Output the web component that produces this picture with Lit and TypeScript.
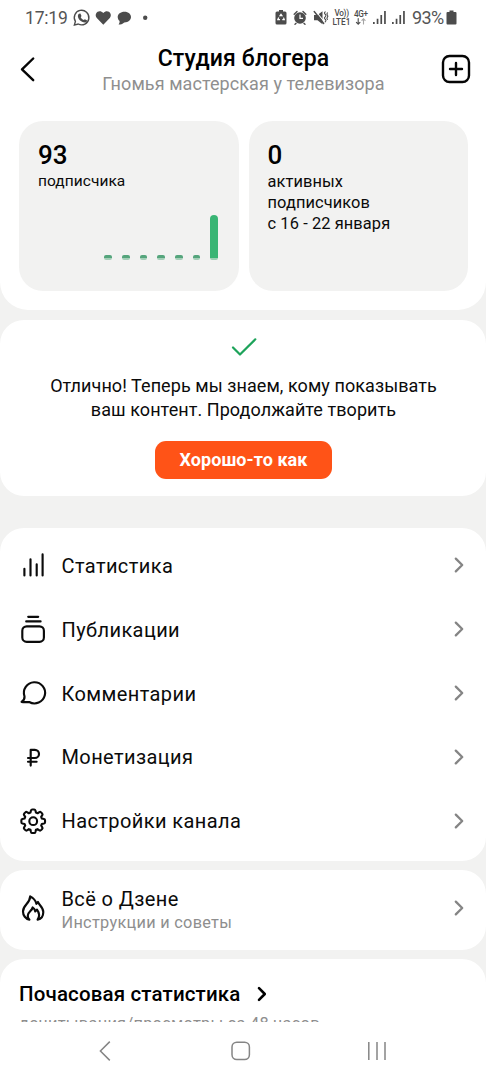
import { LitElement, html, css, svg, TemplateResult, SVGTemplateResult } from "lit";
import { customElement, property } from "lit/decorators.js";

const icons: Record<string, SVGTemplateResult> = {
  stats: svg`<path d="M7.4 19.8V26.4M13.5 10.2V26.4M19.7 15.2V26.4M25.6 5.4V26.4" />`,
  posts: svg`<path d="M11.2 3.8H21.2M9.2 8.4H23.6" /><rect x="5.3" y="13.3" width="21.6" height="15.6" rx="4.4" />`,
  comments: svg`<path d="M7.5 19.3A10.6 10.6 0 1 1 12.2 25C9.8 25 7.2 25.3 4.6 24.9C6.8 23.4 7.8 22 7.5 19.3Z" />`,
  money: svg`<path d="M13.7 24.6V8.8H17.9A4.1 4.1 0 0 1 17.9 17H11M11 20.7H19.6" />`,
  settings: svg`<g transform="translate(.2 .2) translate(16 16) scale(.97) translate(-16 -16)"><circle cx="16" cy="16" r="4" /><path d="M13.7 4.9Q14 3.9 15 3.9H17Q18 3.9 18.3 4.9L18.8 7.1L20.5 7.8L22.4 6.6Q23.3 6.1 24.1 6.9L25.2 8Q26 8.8 25.4 9.7L24.2 11.5L24.9 13.2L27.1 13.7Q28.2 14 28.2 15V17Q28.2 18 27.1 18.3L24.9 18.8L24.2 20.5L25.4 22.4Q26 23.3 25.2 24.1L24.1 25.2Q23.3 26 22.4 25.4L20.5 24.2L18.8 24.9L18.3 27.1Q18 28.2 17 28.2H15Q14 28.2 13.7 27.1L13.2 24.9L11.5 24.2L9.6 25.4Q8.7 26 7.9 25.2L6.8 24.1Q6 23.3 6.6 22.4L7.8 20.5L7.1 18.8L4.9 18.3Q3.8 18 3.8 17V15Q3.8 14 4.9 13.7L7.1 13.2L7.8 11.5L6.6 9.7Q6 8.8 6.8 8L7.9 6.9Q8.7 6.1 9.6 6.6L11.5 7.8L13.2 7.1Z" /></g>`,
  fire: svg`<path d="M12.4 27.6C8.6 27 6 23.4 6 19.4C6 13 13 11.5 13.2 4.4C16.4 6 18.6 8.6 19.4 11.8L21 10C21.6 12.8 26.3 15 26.3 20C26.3 24 24 27 20.6 27.6C22.6 24.6 22.4 20.8 20 17.6L18.2 19.4C18 17.6 17.2 16.2 15.6 15.4C15.4 18.6 11 19.8 10.8 23.6C10.7 25.4 11.4 26.8 12.4 27.6" />`,
};

const chevron = html`<svg class="chevron" width="12" height="18" viewBox="0 0 12 18"><path d="M2.8 2.6L9.2 9L2.8 15.4" /></svg>`;

/** Samsung-style system status bar. */
@customElement("status-bar")
export class StatusBar extends LitElement {
  static styles = css`
    :host { display: flex; height: 36px; justify-content: space-between; padding: 0 28px 0 25px; box-sizing: border-box; color: #555; font: 17.5px/36px Roboto, sans-serif; }
    .group { display: flex; }
    svg { display: block; height: 36px; fill: #4c4c4c; }
    .time { width: 46px; letter-spacing: -0.2px; }
    .percent { width: 34px; font-size: 18px; letter-spacing: -0.6px; }
    .line { fill: none; stroke: #4c4c4c; stroke-width: 1.4; stroke-linecap: round; }
    .thin { fill: none; stroke: #4c4c4c; stroke-width: 1.1; stroke-linecap: round; }
    .light { fill: none; stroke: #fff; stroke-width: 1.2; }
    .tiny { font: 500 8.2px Roboto, sans-serif; }
  `;
  private signal() {
    return html`<svg width="19" viewBox="370 0 19 36"><path d="M373 22h1.7V24h-1.7zM376.7 18.8h1.7V24h-1.7zM380.4 15h1.7V24h-1.7zM384.1 11h1.7V24h-1.7z" /></svg>`;
  }
  render() {
    return html`
      <div class="group">
        <span class="time">17:19</span>
        <svg width="21" viewBox="71 0 21 36"><path class="line" d="M75.4 21.4A7.3 7.3 0 1 1 78.2 24L74.4 25.1Z" /><path d="M79 13.8l1.4-.3 1.1 2.5-.8 1.2q1 2 3 2.9l1.2-.9 2.3 1.2q-.2 2-2.3 2.1c-4-.2-7.2-3.8-7-6.8q.2-1.2 1.1-1.9z" /></svg>
        <svg width="22" viewBox="92 0 22 36"><path d="M103.3 24.8L96.8 18C93.3 13.5 99.3 8.6 103.3 13.1C107.3 8.6 113.3 13.5 109.8 18Z" /></svg>
        <svg width="22" viewBox="114 0 22 36"><path d="M124.5 11.7c4 0 6.5 2.5 6.5 5.4s-2.8 5.4-6.8 5.3c-1.6 1.5-3.6 2.2-5.6 2.2q1.3-1.7 1-3.5c-1.2-1-1.9-2.5-1.9-4 0-3 2.8-5.4 6.8-5.4z" /></svg>
        <svg width="16" viewBox="137 0 16 36"><circle cx="146.2" cy="17.8" r="2.2" /></svg>
      </div>
      <div class="group">
        <svg width="18" viewBox="271.5 0 18 36"><path d="M278.5 10h4v1.6h2q1.5 0 1.5 1.5V23q0 1.5-1.5 1.5h-8q-1.5 0-1.5-1.5V13q0-1.5 1.5-1.5h2z" /><path class="light" d="M279.1 16.3l1.4-2 1.4 2M283 17.6l.8 2.1h-2M279.5 19.7h-2.2l.9-2.2" /></svg>
        <svg width="21" viewBox="290 0 21 36"><circle cx="300" cy="18" r="5.8" /><path class="line" d="M294.2 14.2l2.8-2.6M305.8 14.2l-2.8-2.6M296 23.4l-1 .8M304 23.4l1 .8" /><path class="light" d="M300 14.4V18.4H303" /></svg>
        <svg width="20" viewBox="311 0 20 36"><path d="M314 15h3.5l5-3.8v13l-5-4H314z" /><path class="light" d="M315.2 10.5l10 12.5" /><path class="line" d="M314.2 11.5l9.5 12" /><path class="thin" d="M325.2 11.8q-1.5 1.3 0 2.5t0 2.5 0 2.5 0 2.5" /><path class="thin" d="M327.4 12.8q-1 1.1 0 2.2t0 2.2 0 2.2" /></svg>
        <svg width="22" viewBox="331 0 22 36"><text class="tiny" x="334.5" y="16.2" textLength="14.5">Vo))</text><text class="tiny" x="332.5" y="24.7" textLength="18">LTE1</text></svg>
        <svg width="17" viewBox="353 0 17 36"><text class="tiny" x="354" y="16.8" textLength="14">4G+</text><path class="thin" d="M358.2 18.5V24M356.4 22.3l1.8 1.8 1.8-1.8" /><path class="thin" opacity=".5" d="M363.5 24V19M361.9 20.4l1.6-1.6 1.6 1.6" /></svg>
        ${this.signal()}${this.signal()}
        <svg width="4"></svg>
        <span class="percent">93%</span>
        <svg width="12" viewBox="446 0 12 36"><path d="M449.5 10.5h4V12h2q1 0 1 1V23.5q0 1-1 1h-8q-1 0-1-1V13q0-1 1-1h2z" /></svg>
      </div>`;
  }
}

/** A single tappable row with icon, title and optional hint. */
@customElement("menu-row")
export class MenuRow extends LitElement {
  @property() icon = "stats";
  @property() label = "";
  @property() hint = "";
  static styles = css`
    :host { display: flex; align-items: center; height: 63.8px; padding: 0 21px 0 17px; box-sizing: border-box; color: #0b0b0b; }
    .icon { width: 32px; height: 32px; fill: none; stroke: #0b0b0b; stroke-width: 2.15; stroke-linecap: round; stroke-linejoin: round; flex: none; }
    .text { flex: 1; margin-left: 12.5px; padding-top: 1.4px; }
    .text.double { padding-top: 4.5px; }
    .label { font-size: 20px; line-height: 24px; letter-spacing: 0.4px; }
    .hint { font-size: 16.3px; line-height: 20px; margin-top: 2px; color: #8e8e8e; letter-spacing: 0.3px; }
    .chevron { fill: none; stroke: #858585; stroke-width: 2.3; stroke-linecap: round; stroke-linejoin: round; }
  `;
  render(): TemplateResult {
    return html`
      <svg class="icon" viewBox="0 0 32 32">${icons[this.icon]}</svg>
      <div class="text ${this.hint ? "double" : ""}">
        <div class="label">${this.label}</div>
        ${this.hint ? html`<div class="hint">${this.hint}</div>` : ""}
      </div>
      ${chevron}`;
  }
}

@customElement("app-root")
export class AppRoot extends LitElement {
  private readonly bars = [5, 5, 5, 5, 5, 5, 45];
  private readonly menu = [
    { icon: "stats", label: "Статистика" },
    { icon: "posts", label: "Публикации" },
    { icon: "comments", label: "Комментарии" },
    { icon: "money", label: "Монетизация" },
    { icon: "settings", label: "Настройки канала" },
  ];
  static styles = css`
    :host { display: flex; flex-direction: column; height: 1080px; overflow: hidden; background: #f2f2f1; font-family: Roboto, sans-serif; color: #0b0b0b; }
    * { box-sizing: border-box; }
    .top { background: #fff; height: 310px; flex: none; border-radius: 0 0 28px 28px; }
    .header { display: flex; height: 85px; padding: 10px 14px 0 18px; justify-content: space-between; }
    .header svg { fill: none; stroke: #050505; stroke-width: 2.4; stroke-linecap: round; stroke-linejoin: round; margin-top: 7px; }
    .titles { text-align: center; padding-left: 1px; }
    .title { font-size: 23px; font-weight: 500; line-height: 26px; letter-spacing: 0.18px; color: #000; }
    .subtitle { font-size: 18px; line-height: 22px; letter-spacing: 0.07px; color: #8f8f8f; margin-top: 1px; }
    .cards { display: grid; grid-template-columns: 220px 219.5px; gap: 9.5px; padding: 0 19px; }
    .card { background: #f2f2f1; border-radius: 24px; height: 170px; padding: 19px 19px 0; display: flex; flex-direction: column; }
    .number { font-size: 26px; line-height: 30px; font-weight: 500; color: #000; }
    .caption { font-size: 15.5px; line-height: 21px; letter-spacing: 0.05px; margin-top: 0.5px; }
    .caption.wide { font-size: 16.4px; letter-spacing: 0.1px; }
    .chart { display: flex; align-items: flex-end; justify-content: flex-end; gap: 10.1px; margin: 23.5px 2px 0 0; height: 45px; }
    .bar { width: 7.6px; border-radius: 4px 4px 2px 2px; background: linear-gradient(to top, #9dcfb4 2px, #39b574 2px); }
    .bar.low { border-radius: 2px; background: linear-gradient(to top, #a5cfb8 2.2px, #55a57c 2.2px); }
    .panel { background: #fff; border-radius: 24px; flex: none; }
    .notice { margin-top: 9.5px; height: 176.5px; display: flex; flex-direction: column; align-items: center; padding: 16px 0 0 1px; }
    .check { fill: none; stroke: #1da35a; stroke-width: 2.2; stroke-linecap: round; stroke-linejoin: round; }
    .message { font-size: 18px; line-height: 23.5px; text-align: center; margin-top: 16.5px; letter-spacing: 0.07px; }
    .button { margin-top: 19.5px; width: 177px; height: 38px; border: 0; border-radius: 11px; background: #ff5317; color: #fff; font: 700 18px/38px Roboto, sans-serif; letter-spacing: 0.05px; text-align: center; padding: 0; }
    .menu { margin-top: 31.5px; height: 333px; padding-top: 6px; }
    .about { margin-top: 9px; height: 80.2px; padding-top: 6.5px; }
    .hourly { margin-top: 9.5px; height: 63px; overflow: hidden; border-radius: 24px 24px 0 0; padding: 20.4px 19px 0; }
    .hourly-title { display: flex; align-items: center; gap: 15.3px; font-size: 20.5px; font-weight: 500; line-height: 28px; color: #000; letter-spacing: 0.15px; }
    .hourly-title svg { fill: none; stroke: #000; stroke-width: 2.6; stroke-linecap: round; stroke-linejoin: round; }
    .hourly-sub { font-size: 16.4px; line-height: 22px; margin-top: 5px; color: #8e8e8e; letter-spacing: 0.27px; }
    .nav { background: #fff; flex: 1; display: grid; grid-template-columns: repeat(3, 136px); padding-left: 37px; justify-items: center; align-items: center; }
    .nav svg { fill: none; stroke: #858585; stroke-width: 1.5; }
  `;
  render() {
    return html`
      <div class="top">
        <status-bar></status-bar>
        <div class="header">
          <svg width="28" height="32" viewBox="18 53 28 32"><path d="M33.2 58.5L22 69.3L33.2 80.2" /></svg>
          <div class="titles">
            <div class="title">Студия блогера</div>
            <div class="subtitle">Гномья мастерская у телевизора</div>
          </div>
          <svg width="32" height="32" viewBox="440 53 32 32"><rect x="443" y="56" width="26" height="26" rx="6.5" /><path d="M450 69H462M456 63V75" /></svg>
        </div>
        <div class="cards">
          <div class="card">
            <div class="number">93</div>
            <div class="caption">подписчика</div>
            <div class="chart">${this.bars.map((h) => html`<div class="bar ${h < 10 ? "low" : ""}" style="height:${h}px"></div>`)}</div>
          </div>
          <div class="card">
            <div class="number">0</div>
            <div class="caption wide">активных<br />подписчиков<br />с 16 - 22 января</div>
          </div>
        </div>
      </div>
      <div class="panel notice">
        <svg class="check" width="28" height="22" viewBox="230 336 28 22"><path d="M233 347.5L240 354.5L255.3 339.3" /></svg>
        <div class="message">Отлично! Теперь мы знаем, кому показывать<br />ваш контент. Продолжайте творить</div>
        <button class="button">Хорошо-то как</button>
      </div>
      <div class="panel menu">
        ${this.menu.map((m) => html`<menu-row icon=${m.icon} label=${m.label}></menu-row>`)}
      </div>
      <div class="panel about">
        <menu-row icon="fire" label="Всё о Дзене" hint="Инструкции и советы"></menu-row>
      </div>
      <div class="panel hourly">
        <div class="hourly-title">Почасовая статистика
          <svg width="12" height="18" viewBox="0 0 12 18"><path d="M3 3.2L8.8 9L3 14.8" /></svg>
        </div>
        <div class="hourly-sub">дочитывания/просмотры за 48 часов</div>
      </div>
      <div class="nav">
        <svg width="20" height="24" viewBox="0 0 20 24"><path d="M14.8 2.6L5.4 12L14.8 21.4" /></svg>
        <svg width="24" height="24" viewBox="0 0 24 24"><rect x="3" y="3.2" width="17.4" height="17.4" rx="4.8" /></svg>
        <svg width="24" height="24" viewBox="0 0 24 24"><path d="M3.8 3V21M12 3V21M20 3V21" /></svg>
      </div>`;
  }
}
